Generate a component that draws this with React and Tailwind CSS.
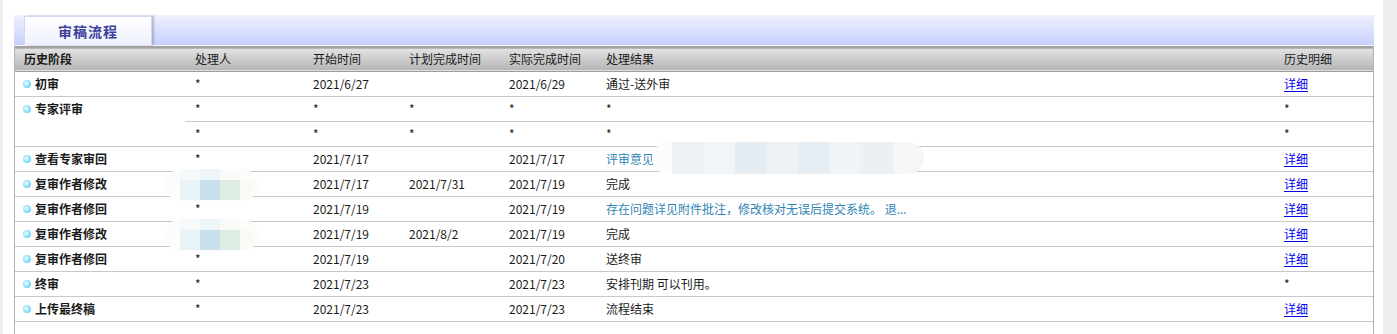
import React from 'react'

const rows = [
  { stage: '初审', person: '*', start: '2021/6/27', plan: '', done: '2021/6/29', result: '通过-送外审', detail: 'link' },
  { stage: '专家评审', person: '*', start: '*', plan: '*', done: '*', result: '*', detail: '*', span: 2 },
  { stage: null, person: '*', start: '*', plan: '*', done: '*', result: '*', detail: '*' },
  { stage: '查看专家审回', person: '*', start: '2021/7/17', plan: '', done: '2021/7/17', result: '评审意见.', blue: true, blurResult: true, detail: 'link' },
  { stage: '复审作者修改', person: '', blurPerson: true, start: '2021/7/17', plan: '2021/7/31', done: '2021/7/19', result: '完成', detail: 'link' },
  { stage: '复审作者修回', person: '*', start: '2021/7/19', plan: '', done: '2021/7/19', result: '存在问题详见附件批注，修改核对无误后提交系统。 退...', blue: true, detail: 'link' },
  { stage: '复审作者修改', person: '', blurPerson: true, start: '2021/7/19', plan: '2021/8/2', done: '2021/7/19', result: '完成', detail: 'link' },
  { stage: '复审作者修回', person: '*', start: '2021/7/19', plan: '', done: '2021/7/20', result: '送终审', detail: 'link' },
  { stage: '终审', person: '*', start: '2021/7/23', plan: '', done: '2021/7/23', result: '安排刊期 可以刊用。', detail: '*' },
  { stage: '上传最终稿', person: '*', start: '2021/7/23', plan: '', done: '2021/7/23', result: '流程结束', detail: 'link' },
]

const Bullet = () => (
  <span className="inline-block w-[8px] h-[8px] rounded-full bg-[radial-gradient(circle_at_40%_40%,#f4fdff_0%,#8fe0fa_50%,#45c2f0_100%)]"></span>
)

// mosaic for masked person names
const PersonMask = () => (
  <div className="absolute left-[-20px] top-[-3px] w-[93px] h-[32px] rounded-full bg-[#fbfcfc] overflow-hidden">
    <div className="flex h-[11px] ml-[15px]">
      <div className="w-[20px] bg-[#f5f9fa]"></div>
      <div className="w-[20px] bg-[#eff6f9]"></div>
      <div className="w-[20px] bg-[#fafaf8]"></div>
      <div className="w-[13px] bg-[#fcfcfa]"></div>
    </div>
    <div className="flex h-[20px] ml-[15px]">
      <div className="w-[20px] bg-[#e9f2f7]"></div>
      <div className="w-[20px] bg-[#c7e0ec]"></div>
      <div className="w-[20px] bg-[#dfece2]"></div>
      <div className="w-[13px] bg-[#f8faf3]"></div>
    </div>
  </div>
)

const ResultMask = () => (
  <div className="absolute left-[56px] top-[-5px] w-[272px] h-[32px] rounded-full bg-[#fbfcfd] overflow-hidden flex pl-[20px]">
    {['#eef2f5', '#f1f5f7', '#e4ecf1', '#edf2f5', '#e6edf2', '#f0f4f6', '#eaf0f3', '#f4f6f8'].map((c, i) => (
      <div key={i} className="w-[37px] h-full" style={{ backgroundColor: c }}></div>
    ))}
  </div>
)

const Detail = ({ v }) =>
  v === 'link' ? (
    <a href="#" className="text-[#0000ee] underline underline-offset-2">详细</a>
  ) : (
    <span>{v}</span>
  )

export default function App() {
  return (
    <div className="flex h-[334px] bg-white font-['Noto_Sans_CJK_SC','Liberation_Sans',sans-serif] text-[12px] text-[#1a1a1a] overflow-hidden">
      <div className="w-[3px] bg-[#ededed]"></div>
      <div className="w-[1380px] pl-[11px] pr-[9px] pt-[15px]">
        {/* tab bar */}
        <div className="h-[31px] bg-gradient-to-b from-[#eff1fe] to-[#c7cffd] pl-[10px] pt-[1px] border-b border-[#f4f5ff]">
          <div className="w-[128px] h-[29px] bg-gradient-to-b from-white to-[#eef0fc] border border-[#d4d8ee] border-b-0 shadow-[2px_0_2px_rgba(120,120,160,0.45)] flex items-center justify-center">
            <span className="text-[14px] font-bold text-[#3d3f9c] tracking-[1px]">审稿流程</span>
          </div>
        </div>

        {/* table */}
        <div className="border-x border-[#b4b4b4] h-[300px]">
          <table className="w-full table-fixed border-collapse">
            <colgroup>
              <col className="w-[170px]" />
              <col className="w-[118px]" />
              <col className="w-[96px]" />
              <col className="w-[100px]" />
              <col className="w-[97px]" />
              <col className="w-[678px]" />
              <col className="w-[99px]" />
            </colgroup>
            <thead>
              <tr className="h-[24px] bg-gradient-to-b from-[#e2e2e2] to-[#b6b6b6] border-t-2 border-[#a3a3a3] border-b border-b-[#9d9d9d] text-left">
                <th className="pl-[9px] font-bold">历史阶段</th>
                <th className="pl-[10px] font-normal">处理人</th>
                <th className="pl-[10px] font-normal">开始时间</th>
                <th className="pl-[10px] font-normal">计划完成时间</th>
                <th className="pl-[10px] font-normal">实际完成时间</th>
                <th className="pl-[10px] font-normal">处理结果</th>
                <th className="pl-[10px] font-normal">历史明细</th>
              </tr>
            </thead>
            <tbody>
              {rows.map((r, i) => (
                <tr key={i} className="h-[25px] border-b border-[#c8c8c8]">
                  {r.stage !== null && (
                    <td rowSpan={r.span || 1} className="align-top p-0 border-b border-[#c8c8c8]">
                      <div className="h-[24px] flex items-center gap-[4px] pl-[8px] font-bold">
                        <Bullet />
                        <span>{r.stage}</span>
                      </div>
                    </td>
                  )}
                  <td className="pl-[10px] relative">
                    {r.blurPerson ? <PersonMask /> : r.person}
                  </td>
                  <td className="pl-[10px]">{r.start}</td>
                  <td className="pl-[10px]">{r.plan}</td>
                  <td className="pl-[10px]">{r.done}</td>
                  <td className={`pl-[10px] relative whitespace-nowrap ${r.blue ? 'text-[#3185b5]' : ''}`}>
                    {r.result}
                    {r.blurResult && <ResultMask />}
                  </td>
                  <td className="pl-[10px]">
                    <Detail v={r.detail} />
                  </td>
                </tr>
              ))}
            </tbody>
          </table>
        </div>
      </div>
      <div className="flex-1 bg-[#ededed]"></div>
    </div>
  )
}
